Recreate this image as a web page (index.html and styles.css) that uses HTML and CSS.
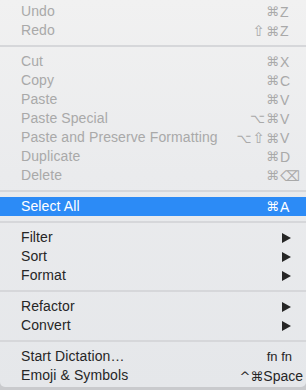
FILE: index.html
```html
<!DOCTYPE html>
<html>
<head>
<meta name="viewport" content="width=device-width, initial-scale=1">
<link rel="stylesheet" href="styles.css">
</head>
<body>

<!-- Edit menu -->
<div class="menu">
    <div class="item disabled"><span class="label">Undo</span><span class="mods">⌘</span><span class="key">Z</span></div>
    <div class="item disabled"><span class="label">Redo</span><span class="mods"><span class="shift">⇧</span>⌘</span><span class="key">Z</span></div>
    <div class="sep"></div>
    <div class="item disabled"><span class="label">Cut</span><span class="mods">⌘</span><span class="key">X</span></div>
    <div class="item disabled"><span class="label">Copy</span><span class="mods">⌘</span><span class="key">C</span></div>
    <div class="item disabled"><span class="label">Paste</span><span class="mods">⌘</span><span class="key">V</span></div>
    <div class="item disabled"><span class="label">Paste Special</span><span class="mods">⌥⌘</span><span class="key">V</span></div>
    <div class="item disabled"><span class="label">Paste and Preserve Formatting</span><span class="mods">⌥<span class="shift">⇧</span>⌘</span><span class="key">V</span></div>
    <div class="item disabled"><span class="label">Duplicate</span><span class="mods">⌘</span><span class="key">D</span></div>
    <div class="item disabled"><span class="label">Delete</span><span class="mods">⌘</span><span class="key">⌫</span></div>
    <div class="sep"></div>
    <div class="item selected"><span class="label">Select All</span><span class="mods">⌘</span><span class="key">A</span></div>
    <div class="sep"></div>
    <div class="item"><span class="label">Filter</span><span class="mods"></span><span class="key"><svg class="arrow" width="9" height="10" viewBox="0 0 9 10"><polygon points="0,0 9,5 0,10"/></svg></span></div>
    <div class="item"><span class="label">Sort</span><span class="mods"></span><span class="key"><svg class="arrow" width="9" height="10" viewBox="0 0 9 10"><polygon points="0,0 9,5 0,10"/></svg></span></div>
    <div class="item"><span class="label">Format</span><span class="mods"></span><span class="key"><svg class="arrow" width="9" height="10" viewBox="0 0 9 10"><polygon points="0,0 9,5 0,10"/></svg></span></div>
    <div class="sep"></div>
    <div class="item"><span class="label">Refactor</span><span class="mods"></span><span class="key"><svg class="arrow" width="9" height="10" viewBox="0 0 9 10"><polygon points="0,0 9,5 0,10"/></svg></span></div>
    <div class="item"><span class="label">Convert</span><span class="mods"></span><span class="key"><svg class="arrow" width="9" height="10" viewBox="0 0 9 10"><polygon points="0,0 9,5 0,10"/></svg></span></div>
    <div class="sep"></div>
    <div class="item"><span class="label">Start Dictation…</span><span class="mods fn">fn fn</span><span class="key"></span></div>
    <div class="item"><span class="label">Emoji &amp; Symbols</span><span class="mods wide">^⌘<span class="plain">Space</span></span><span class="key"></span></div>
</div>

</body>
</html>
```

FILE: styles.css
```css
* {
    box-sizing: border-box;
    margin: 0;
    padding: 0;
}

body {
    width: 306px;
    height: 390px;
    overflow: hidden;
    background: #c9cacd;
    font-family: 'Liberation Sans', 'DejaVu Sans', sans-serif;
    font-size: 14px;
    color: #262626;
}

.menu {
    height: 387px;
    padding-top: 2px;
    background: linear-gradient(180deg, #f1f1f1 0%, #eaebed 45%, #e5e7ea 100%);
    border-radius: 0 0 5px 5px;
}

.item {
    display: grid;
    grid-template-columns: 1fr auto 11px;
    align-items: center;
    height: 19px;
    padding-left: 21px;
    padding-right: 15px;
    white-space: nowrap;
}

.label {
    line-height: 19px;
    letter-spacing: 0.1px;
}

.mods {
    text-align: right;
    font-family: 'DejaVu Sans', sans-serif;
    font-size: 13px;
    letter-spacing: 1px;
}

.shift {
    font-size: 15px;
}

.mods.fn {
    font-family: 'Liberation Sans', sans-serif;
    letter-spacing: 0;
    margin-right: -12px;
}

.mods.wide {
    letter-spacing: 0;
    margin-right: -23px;
}

.plain {
    font-family: 'Liberation Sans', sans-serif;
    font-size: 14px;
}

.key {
    font-size: 14px;
}

.arrow {
    display: block;
    margin-left: 2px;
    fill: #262626;
}

.disabled {
    color: #a9a9a9;
}

.selected {
    background: #2c8bf6;
    color: #fff;
}

.sep {
    height: 12px;
    padding: 5px 0;
}

.sep::after {
    content: "";
    display: block;
    height: 2px;
    background: #d6d7da;
}
```
